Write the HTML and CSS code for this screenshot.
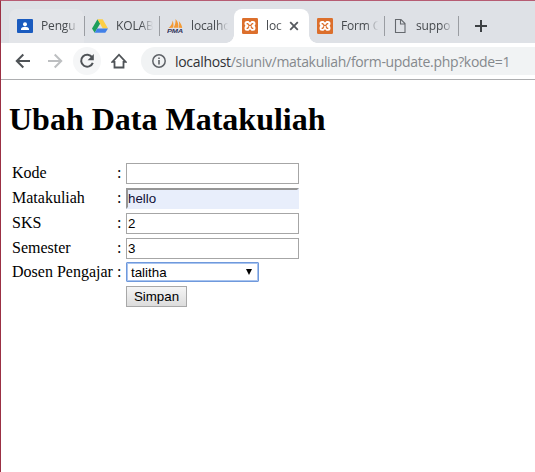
FILE: index.html
```html
<!DOCTYPE html>
<html lang="id">
<head>
<meta charset="utf-8">
<title>Ubah Data Matakuliah</title>
<link rel="stylesheet" href="styles.css">
</head>
<body>
<svg class="defs" width="0" height="0">
  <symbol id="xampp" viewBox="0 0 16 16">
    <rect width="16" height="16" rx="1.2" fill="#dc6f2c"/>
    <path d="M5 3H6.500L8 4.500 9.500 3H11Q13.500 3 13.500 5.500Q13.500 7 12.600 7.800Q13.500 8.600 13.500 10.300Q13.500 12.800 11 12.800H9.500L8 11.300 6.500 12.800H5Q2.500 12.800 2.500 10.300Q2.500 8.600 3.400 7.800Q2.500 7 2.500 5.500Q2.500 3 5 3Z" fill="#fff"/>
    <path d="M4.600 5.600H5.700L7 7.300H8.900L10.200 5.600H11.300M4.600 10.300H5.700L7 8.300M11.300 10.300H10.200L8.900 8.300" fill="none" stroke="#dc6f2c" stroke-width="1.300"/>
  </symbol>
</svg>
<div class="window">
  <div class="tabs">
    <div class="tab hovered">
      <svg class="icon" viewBox="0 0 16 16"><rect y="1" width="16" height="14" rx="1" fill="#1a5bbf"/><circle cx="8" cy="6.300" r="2" fill="#fff"/><path d="M4 12v-1c0-1.500 2.500-2.200 4-2.200s4 .7 4 2.200v1z" fill="#fff"/></svg>
      <span class="label">Pengu</span>
    </div>
    <div class="tab">
      <svg class="icon" viewBox="0 0 16 16"><path d="M5.500 1.300 0 10.500l2.700 4.300L8.200 5.600z" fill="#1c9f5c"/><path d="M5.500 1.300h5.200L16 10.500h-5.200z" fill="#fdce45"/><path d="M5.300 10.500H16l-2.700 4.300H2.700z" fill="#4180e8"/></svg>
      <span class="label">KOLAB</span>
    </div>
    <div class="tab bare">
      <svg class="icon" viewBox="0 0 16 16"><path d="M1.500 10C4 8.500 5.300 5.500 5.600 2.500C6.600 5 6.800 8 6 9.800zM6.600 9.800C8.300 7 8.800 3.500 8.500 1C11 3.500 11.900 7 11.200 9.800zM11.700 9.800C12.300 8 12.300 5.500 11.800 3C13.900 5 15 8 15.200 10z" fill="#f39a35"/><text x="0" y="15.300" class="pma" textLength="16" lengthAdjust="spacingAndGlyphs">PMA</text></svg>
      <span class="label">localho</span>
    </div>
    <div class="tab active">
      <svg class="icon"><use href="#xampp"/></svg>
      <span class="label short">loc</span>
      <svg class="close" viewBox="0 0 10 10"><path d="m1.200 1.200 7.600 7.600M8.800 1.200 1.200 8.800" stroke="#55595e" stroke-width="1.800"/></svg>
    </div>
    <div class="tab">
      <svg class="icon"><use href="#xampp"/></svg>
      <span class="label">Form C</span>
    </div>
    <div class="tab last">
      <svg class="icon" viewBox="0 0 16 16"><path d="M3.500 1.500h5.500l4 4v9H3.500zM8.500 1.500V6H13" fill="none" stroke="#65696e" stroke-width="1.100"/></svg>
      <span class="label">suppo</span>
    </div>
    <svg class="plus" viewBox="0 0 12 12"><path d="M6 0v12M0 6h12" stroke="#3c4043" stroke-width="2"/></svg>
  </div>
  <div class="toolbar">
    <span class="tool"><svg viewBox="0 0 16 16"><path d="M15 8H2M8.300 1.500 1.800 8l6.500 6.500" stroke="#4f5357"/></svg></span>
    <span class="tool"><svg viewBox="0 0 16 16"><path d="M1 8h13M7.700 1.500 14.200 8l-6.500 6.500" stroke="#bdbfc1"/></svg></span>
    <span class="tool round"><svg viewBox="0 0 16 16"><path d="M13.200 4.400A6 6 0 1 0 13.800 9.800" stroke="#4f5357"/><path d="M14.800 1v6.200H8.600z" fill="#4f5357" stroke="none"/></svg></span>
    <span class="tool"><svg viewBox="0 0 16 16"><path d="M1.400 8.800 8 1.700l6.600 7.100H12.500v5.700h-9V8.800z" stroke="#4f5357" stroke-width="1.800"/></svg></span>
    <div class="address">
      <svg class="info" viewBox="0 0 14 14"><circle cx="7" cy="7" r="6.200" fill="none" stroke="#5f6368" stroke-width="1.500"/><path d="M7 6v4.500M7 3.400v1.600" stroke="#5f6368" stroke-width="1.600"/></svg>
      <span class="url"><b>localhost</b>/siuniv/matakuliah/form-update.php?kode=1</span>
    </div>
  </div>
  <main>
    <h1>Ubah Data Matakuliah</h1>
    <form>
      <label>Kode</label><span>:</span><input type="text">
      <label>Matakuliah</label><span>:</span><input type="text" class="filled" value="hello">
      <label>SKS</label><span>:</span><input type="text" value="2">
      <label>Semester</label><span>:</span><input type="text" value="3">
      <label class="lecturer">Dosen Pengajar</label><span class="lecturer">:</span><div class="select">talitha<i></i></div>
      <button type="button">Simpan</button>
    </form>
  </main>
</div>
</body>
</html>
```
FILE: styles.css
```css
* { box-sizing: border-box; }
body { margin: 0; background: #fff; overflow: hidden; }
.defs { display: block; }
.window { height: 472px; border-top: 1px solid #b65c73; border-left: 1px solid #9b3044; }
.tabs {
  display: flex;
  height: 42px;
  padding: 8px 0 0 8px;
  background: #dee1e6;
  font: 12px "Open Sans", "Noto Sans", sans-serif;
  letter-spacing: -0.15px;
  color: #45494d;
}
.tab {
  display: flex;
  align-items: center;
  position: relative;
  width: 75px;
  height: 34px;
  padding-left: 8px;
  flex: none;
}
.tab.hovered { background: #e3e5e9; border-radius: 8px 8px 0 0; }
.tab::after { content: ""; position: absolute; right: -1px; top: 7px; width: 1px; height: 20px; background: #9a9da2; }
.tab.bare::after { display: none; }
.tab.last::after { right: 0; }
.tab.active { background: #fff; border-radius: 8px 8px 0 0; }
.tab.active::before, .tab.active::after {
  content: "";
  position: absolute;
  top: auto;
  bottom: 0;
  width: 8px;
  height: 8px;
}
.tab.active::before { left: -8px; background: radial-gradient(circle at 0 0, transparent 7.5px, #fff 8px); }
.tab.active::after { right: -8px; background: radial-gradient(circle at 100% 0, transparent 7.5px, #fff 8px); }
.icon { width: 16px; height: 16px; flex: none; margin-right: 8px; }
.pma { font: italic bold 6px "Liberation Sans", sans-serif; fill: #34365d; }
.label {
  width: 38px;
  overflow: hidden;
  white-space: nowrap;
  line-height: 18px;
  -webkit-mask-image: linear-gradient(90deg, #000 65%, transparent 98%);
  mask-image: linear-gradient(90deg, #000 65%, transparent 98%);
}
.label.short { width: 16px; -webkit-mask-image: linear-gradient(90deg, #000 70%, #0008 100%); mask-image: linear-gradient(90deg, #000 70%, #0008 100%); }
.close { width: 10px; height: 10px; margin-left: 7px; }
.plus { width: 12px; height: 12px; margin: 11px 0 0 16px; flex: none; }
.toolbar { display: flex; align-items: center; height: 37px; padding-left: 8px; border-bottom: 1px solid #adaeb0; }
.tool { display: flex; align-items: center; justify-content: center; width: 28px; height: 28px; margin-right: 4px; border-radius: 50%; flex: none; }
.tool.round { background: #f5f6f7; }
.tool svg { width: 16px; height: 16px; fill: none; stroke-width: 2; }
.address { display: flex; align-items: center; flex: 1; height: 28px; margin-left: 4px; padding-left: 11px; border-radius: 14px 0 0 14px; background: #f1f3f4; }
.info { width: 14px; height: 14px; margin-right: 9px; flex: none; }
.url { font: 14px "Open Sans", "Noto Sans", sans-serif; letter-spacing: -0.32px; color: #85898d; white-space: nowrap; }
.url b { font-weight: 400; color: #303236; }
main { padding: 21px 0 0 8px; font-family: "Liberation Serif", serif; color: #000; }
h1 { margin: 0; font-size: 32px; line-height: 37px; }
form {
  display: grid;
  grid-template-columns: 106px 8px 173px;
  grid-template-rows: repeat(4, 25px) 24px 21px;
  align-items: start;
  margin: 25px 0 0 3px;
  font-size: 16px;
  line-height: 20px;
}
label { white-space: nowrap; }
form span { margin-left: -1px; }
.lecturer { margin-top: -1px; }
input {
  width: 173px;
  height: 21px;
  margin: 0;
  padding: 1px;
  border: 1px solid #a6a6a6;
  border-radius: 0;
  background: #fff;
  font: 13.333px "Liberation Sans", sans-serif;
}
.filled { border: 2px solid; border-color: #969696 #e8eefb #e8eefb #969696; padding: 0; background: #e8eefb; color: #101038; }
.select {
  display: flex;
  align-items: center;
  justify-content: space-between;
  width: 133px;
  height: 20px;
  margin-top: -1px;
  padding: 0 6px 0 4px;
  border: 1px solid #6f99dc;
  box-shadow: inset 0 0 0 1px #a9c4ef;
  border-radius: 1px;
  font: 13.333px "Liberation Sans", sans-serif;
}
.select i { border: 3.500px solid transparent; border-top: 6px solid #000; border-bottom: 0; }
button {
  grid-column: 3;
  width: 61px;
  height: 21px;
  margin-top: -1px;
  padding: 0;
  border: 1px solid #a8a8a8;
  border-radius: 0;
  background: linear-gradient(#f5f5f5, #dcdcdc);
  font: 13.333px "Liberation Sans", sans-serif;
  color: #000;
}
```
